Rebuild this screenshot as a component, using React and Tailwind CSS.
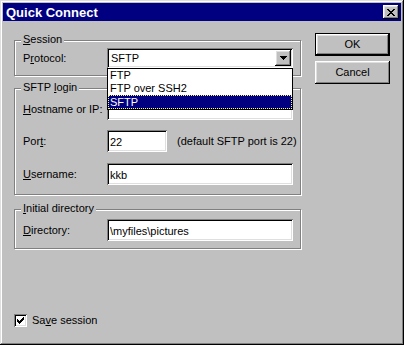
import React from "react";

// classic 3D edges
const raised =
  "shadow-[inset_-1px_-1px_0_#000,inset_1px_1px_0_#dfdfdf,inset_-2px_-2px_0_#808080,inset_2px_2px_0_#fff]";
const btnRaised =
  "shadow-[inset_-1px_-1px_0_#000,inset_1px_1px_0_#fff,inset_-2px_-2px_0_#808080,inset_2px_2px_0_#dfdfdf]";
const sunken =
  "shadow-[inset_1px_1px_0_#808080,inset_-1px_-1px_0_#fff,inset_2px_2px_0_#000,inset_-2px_-2px_0_#dfdfdf]";

const CloseGlyph = () => (
  <svg width="8" height="7" viewBox="0 0 8 7" shapeRendering="crispEdges">
    <path
      d="M0 0h2v1H0zM6 0h2v1H6zM1 1h2v1H1zM5 1h2v1H5zM2 2h4v1H2zM3 3h2v1H3zM2 4h4v1H2zM1 5h2v1H1zM5 5h2v1H5zM0 6h2v1H0zM6 6h2v1H6z"
      fill="#000"
    />
  </svg>
);

const CheckGlyph = () => (
  <svg width="7" height="7" viewBox="0 0 7 7" shapeRendering="crispEdges">
    <path
      d="M6 0h1v1H6zM5 1h2v1H5zM0 2h1v1H0zM4 2h3v1H4zM0 3h2v1H0zM3 3h3v1H3zM0 4h5v1H0zM1 5h3v1H1zM2 6h1v1H2z"
      fill="#000"
    />
  </svg>
);

const GroupBox = ({ label, className, children }) => (
  <div
    className={`relative border border-[#808080] shadow-[1px_1px_0_#fff,inset_1px_1px_0_#fff] ${className}`}
  >
    <span className="absolute left-[6px] top-[-8px] bg-[#c0c0c0] px-[2px] leading-[13px]">
      {label}
    </span>
    {children}
  </div>
);

const Field = ({ value, width = "w-[186px]" }) => (
  <input
    readOnly
    value={value}
    className={`${width} h-[22px] bg-white pl-[3px] pt-[1px] text-[11px] text-black outline-none ${sunken}`}
  />
);

const Row = ({ label, children, className = "" }) => (
  <div className={`flex items-center pl-[8px] ${className}`}>
    <span className="w-[84px] leading-[13px]">{label}</span>
    {children}
  </div>
);

const Button = ({ children, isDefault }) => (
  <div className={isDefault ? "border border-black" : ""}>
    <button
      className={`flex ${isDefault ? "h-[21px] w-[73px]" : "h-[23px] w-[75px]"} items-center justify-center bg-[#c0c0c0] text-[11px] ${btnRaised}`}
    >
      {children}
    </button>
  </div>
);

export default function App() {
  return (
    <div
      className={`flex h-[345px] w-[404px] flex-col bg-[#c0c0c0] p-[3px] font-['Liberation_Sans',Arial,sans-serif] text-[11px] text-black ${raised}`}
    >
      {/* title bar */}
      <div className="flex h-[18px] items-center justify-between bg-[#000080] pl-[3px] pr-[2px]">
        <span className="text-[13px] font-bold leading-none text-white">Quick Connect</span>
        <div className={`flex h-[14px] w-[16px] items-center justify-center bg-[#c0c0c0] ${btnRaised}`}>
          <CloseGlyph />
        </div>
      </div>

      <div className="flex pl-[11px] pt-[12px]">
        {/* left column */}
        <div className="mt-[7px] flex w-[288px] flex-col">
          <GroupBox
            label={<><span className="underline">S</span>ession</>}
            className="h-[36px] w-[287px] pt-[7px]"
          >
            <Row label={<>P<span className="underline">r</span>otocol:</>}>
              <div className="relative">
                <div className={`flex h-[20px] w-[186px] items-center bg-white p-[2px] ${sunken}`}>
                  <span className="flex-1 pl-[2px] leading-[13px]">SFTP</span>
                  <div className={`flex h-[16px] w-[16px] items-center justify-center bg-[#c0c0c0] ${btnRaised}`}>
                    <svg width="7" height="4" viewBox="0 0 7 4" shapeRendering="crispEdges">
                      <path d="M0 0h7v1H0zM1 1h5v1H1zM2 2h3v1H2zM3 3h1v1H3z" fill="#000" />
                    </svg>
                  </div>
                </div>
                {/* open list */}
                <div className="absolute left-0 top-[20px] z-10 flex h-[42px] w-[186px] flex-col border border-black bg-white">
                  <div className="h-[13px] pl-[2px] leading-[13px]">FTP</div>
                  <div className="h-[13px] pl-[2px] leading-[13px]">FTP over SSH2</div>
                  <div className="h-[14px] border border-dotted border-[#ffff80] bg-[#000080] pl-[1px] leading-[12px] text-white">
                    SFTP
                  </div>
                </div>
              </div>
            </Row>
          </GroupBox>

          <GroupBox
            label={<>SFTP <span className="underline">l</span>ogin</>}
            className="mt-[12px] flex h-[107px] w-[287px] flex-col pt-[9px]"
          >
            <Row label={<><span className="underline">H</span>ostname or IP:</>}>
              <Field value="" />
            </Row>
            <Row className="mt-[10px]" label={<>Por<span className="underline">t</span>:</>}>
              <Field value="22" width="w-[60px]" />
              <span className="ml-[10px] leading-[13px]">(default SFTP port is 22)</span>
            </Row>
            <Row className="mt-[11px]" label={<><span className="underline">U</span>sername:</>}>
              <Field value="kkb" />
            </Row>
          </GroupBox>

          <GroupBox
            label={<><span className="underline">I</span>nitial directory</>}
            className="mt-[14px] h-[40px] w-[287px] pt-[9px]"
          >
            <Row label={<><span className="underline">D</span>irectory:</>}>
              <Field value="\myfiles\pictures" />
            </Row>
          </GroupBox>

          <div className="mt-[65px] flex items-center">
            <div className={`flex h-[13px] w-[13px] items-center justify-center bg-white ${sunken}`}>
              <CheckGlyph />
            </div>
            <span className="ml-[5px] leading-[13px]">
              Sa<span className="underline">v</span>e session
            </span>
          </div>
        </div>

        {/* right column */}
        <div className="ml-[13px] flex flex-col gap-[5px]">
          <Button isDefault>OK</Button>
          <Button>Cancel</Button>
        </div>
      </div>
    </div>
  );
}
